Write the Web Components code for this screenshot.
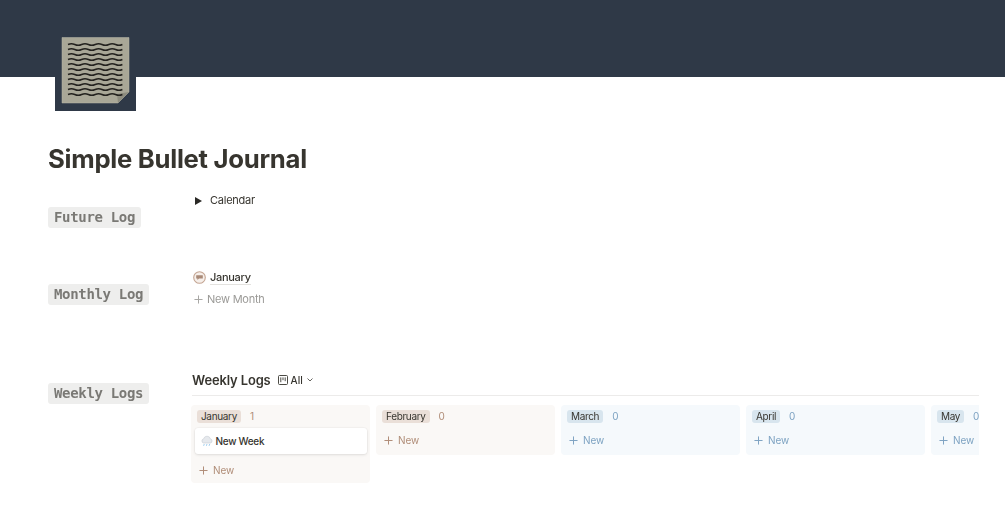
<!DOCTYPE html>
<html lang="en"><head><meta charset="utf-8"><title>Simple Bullet Journal</title>
<style>
html,body{margin:0;padding:0;background:#fff;overflow:hidden}
body{font-family:Inter,"Liberation Sans",sans-serif;color:#37352f;width:1005px;height:524px}
</style></head><body>
<journal-page>
  <page-cover slot="cover"></page-cover>
  <h1 slot="title" style="margin:0;font:700 25.7px/34px Inter,sans-serif;letter-spacing:-.28px;color:#37352f">Simple Bullet Journal</h1>
  <log-row slot="rows" label="Future Log" height="76" labeltop="16">
    <toggle-item>Calendar</toggle-item>
  </log-row>
  <log-row slot="rows" label="Monthly Log" height="100" labeltop="17">
    <month-link>January</month-link>
    <new-line>New Month</new-line>
  </log-row>
  <log-row slot="rows" label="Weekly Logs" height="140" labeltop="16">
    <board-view title-text="Weekly Logs">
      <board-column name="January" count="1" theme="brown" wide><week-card>New Week</week-card></board-column>
      <board-column name="February" count="0" theme="brown"></board-column>
      <board-column name="March" count="0" theme="blue"></board-column>
      <board-column name="April" count="0" theme="blue"></board-column>
      <board-column name="May" count="0" theme="blue"></board-column>
    </board-view>
  </log-row>
</journal-page>
<script>
const def=(n,html)=>{customElements.define(n,class extends HTMLElement{
  connectedCallback(){ if(this.shadowRoot)return; const r=this.attachShadow({mode:'open'});
    r.innerHTML=typeof html==='function'?html(this):html; }
})};
const plus=c=>`<svg width="9" height="9" viewBox="0 0 10 10" style="flex:none"><path d="M5 .5v9M.5 5h9" stroke="${c}" stroke-width="1.1" fill="none"/></svg>`;
def('journal-page',`<style>
:host{display:block;position:relative;filter:blur(.35px)}
.banner{height:77px;background:#2f3947}
main{padding:65px 26px 0 48px}
.rows{display:block;margin-top:14px}
</style><div class="banner"></div><slot name="cover"></slot>
<main><slot name="title"></slot><div class="rows"><slot name="rows"></slot></div></main>`);
let waves='';
for(let i=0;i<11;i++){const y=44.5+i*5;let d=`M68 ${y}`;for(let k=0;k<4;k++){d+=' q3.4 -1.6 6.8 0 t6.8 0';}
 waves+=`<path d="${d}" fill="none" stroke="#23211e" stroke-width="1.4"/>`;}
def('page-cover',`<style>:host{display:block;position:absolute;left:55px;top:27px;width:81px;height:84px;background:#2f3947}
svg{display:block}</style>
<svg width="81" height="84" viewBox="55 27 81 84"><path d="M62 37.5h67v54.500l-11 11H62z" fill="#a9a797" stroke="#b9b8ab" stroke-width=".5"/><path d="M129 92l-11 11-1-9z" fill="#8d8c7e"/>${waves}</svg>`);
def('log-row',el=>`<style>:host{display:grid;grid-template-columns:144px 1fr;height:${el.getAttribute('height')}px}
.l{padding-top:${el.getAttribute('labeltop')}px}
.tag{display:inline-block;font:700 14px/21px "DejaVu Sans Mono",monospace;letter-spacing:-.33px;color:#7a7975;background:#eeeeed;border-radius:3px;padding:0 6px}
.c{min-width:0}</style><div class="l"><span class="tag">${el.getAttribute('label')}</span></div><div class="c"><slot></slot></div>`);
def('toggle-item',`<style>:host{display:flex;align-items:center;height:22px;color:#37352f;padding-left:3px}
svg{margin-right:8px}.t{font:400 11px/20px Inter,sans-serif;letter-spacing:-.25px;padding-bottom:2px}</style>
<svg width="7" height="8" viewBox="0 0 7 8"><path d="M0 0l7 4-7 4z" fill="#2a2926"/></svg><span class="t"><slot></slot></span>`);
def('month-link',`<style>:host{display:flex;align-items:center;height:22px;padding-left:1px}
.t{font:500 11px/14px Inter,sans-serif;letter-spacing:-.3px;color:#37352f;border-bottom:1px solid #e3e2df;margin-left:4px}svg{flex:none}</style>
<svg width="13" height="13" viewBox="0 0 13 13"><circle cx="6.5" cy="6.5" r="5.8" fill="#f6efea" stroke="#c4a593" stroke-width="1.1"/><path d="M3.2 4.2h6.6v3.4H6L4.4 8.9V7.6H3.2z" fill="#a98a78"/></svg><span class="t"><slot></slot></span>`);
def('new-line',`<style>:host{display:flex;align-items:center;height:22px;padding-left:2px;gap:4px;font:400 11px/22px Inter,sans-serif;letter-spacing:-.24px;color:#9b9a97}</style>${plus('#a8a7a4')}<span><slot></slot></span>`);
def('board-view',el=>`<style>:host{display:block;width:787px;margin-top:-1px}
.h{display:flex;align-items:center;height:30px;border-bottom:1px solid #ecebea}
.ti{font:600 12.9px/20px Inter,sans-serif;color:#37352f;letter-spacing:-.1px;padding-top:1px}
.v{display:flex;align-items:center;gap:3px;margin-left:7px;font:500 10px/14px Inter,sans-serif;color:#37352f}
.cols{display:flex;gap:6px;margin:9px 0 0 -1px;overflow:hidden;align-items:flex-start;padding-bottom:2px}</style>
<div class="h"><span class="ti">${el.getAttribute('title-text')}</span><span class="v">
<svg width="10" height="10" viewBox="0 0 10 10" fill="none" stroke="#37352f" stroke-width=".9"><rect x=".5" y=".5" width="9" height="9" rx="1"/><path d="M2.8 2.4v4.8M5 2.4v2.8M7.2 2.4v3.8"/></svg>All
<svg width="6" height="4" viewBox="0 0 6 4" fill="none" stroke="#55534e" stroke-width=".9" style="margin-left:1px"><path d="M.5.5L3 3 5.5.5"/></svg></span></div>
<div class="cols"><slot></slot></div>`);
const themes={brown:{bg:'#faf8f6',tag:'#eadfd8',c:'#b08d78'},blue:{bg:'#f5f9fc',tag:'#d8e5ee',c:'#7ea3c2'}};
def('board-column',el=>{const t=themes[el.getAttribute('theme')],w=el.hasAttribute('wide');return `<style>:host{display:block;flex:0 0 179px;background:${t.bg};border-radius:4px;box-sizing:border-box;padding:0 3px;height:${w?78:50}px}
.h{display:flex;align-items:center;height:23px;padding-left:3px}
.tag{font:400 10px/13px Inter,sans-serif;letter-spacing:-.34px;color:#37352f;background:${t.tag};border-radius:3px;padding:0 4px}
.n{font:400 10px/13px Inter,sans-serif;color:${t.c};margin-left:9px}
.new{display:flex;align-items:center;gap:5px;height:20px;margin-top:${w?6:2}px;padding-left:5px;font:400 10px/14px Inter,sans-serif;letter-spacing:-.1px;color:${t.c}}</style>
<div class="h"><span class="tag">${el.getAttribute('name')}</span><span class="n">${el.getAttribute('count')}</span></div><slot></slot>
<div class="new">${plus(t.c)}New</div>`});
def('week-card',`<style>:host{display:flex;align-items:center;box-sizing:border-box;height:26px;margin:0 .5px;background:#fff;border-radius:3px;box-shadow:0 0 0 .5px rgba(15,15,15,.04),0 1px 3px rgba(15,15,15,.1);padding:0 0 1px 6px;gap:3px;font:500 10px/14px Inter,sans-serif;letter-spacing:-.3px;color:#37352f}</style>
<svg width="12" height="12" viewBox="0 0 11 11"><path d="M2.4 7.4a2 2 0 0 1 0-3.9 3.2 3.2 0 0 1 6.2 0 2 2 0 0 1 0 3.9z" fill="#e6e9ed" stroke="#b4bcc5" stroke-width=".4"/><path d="M3 8.3l-.6 1.6M5.5 8.3l-.6 1.6M8 8.3l-.6 1.6" stroke="#8cc3ea" stroke-width=".8"/></svg><span><slot></slot></span>`);
</script>
</body></html>
